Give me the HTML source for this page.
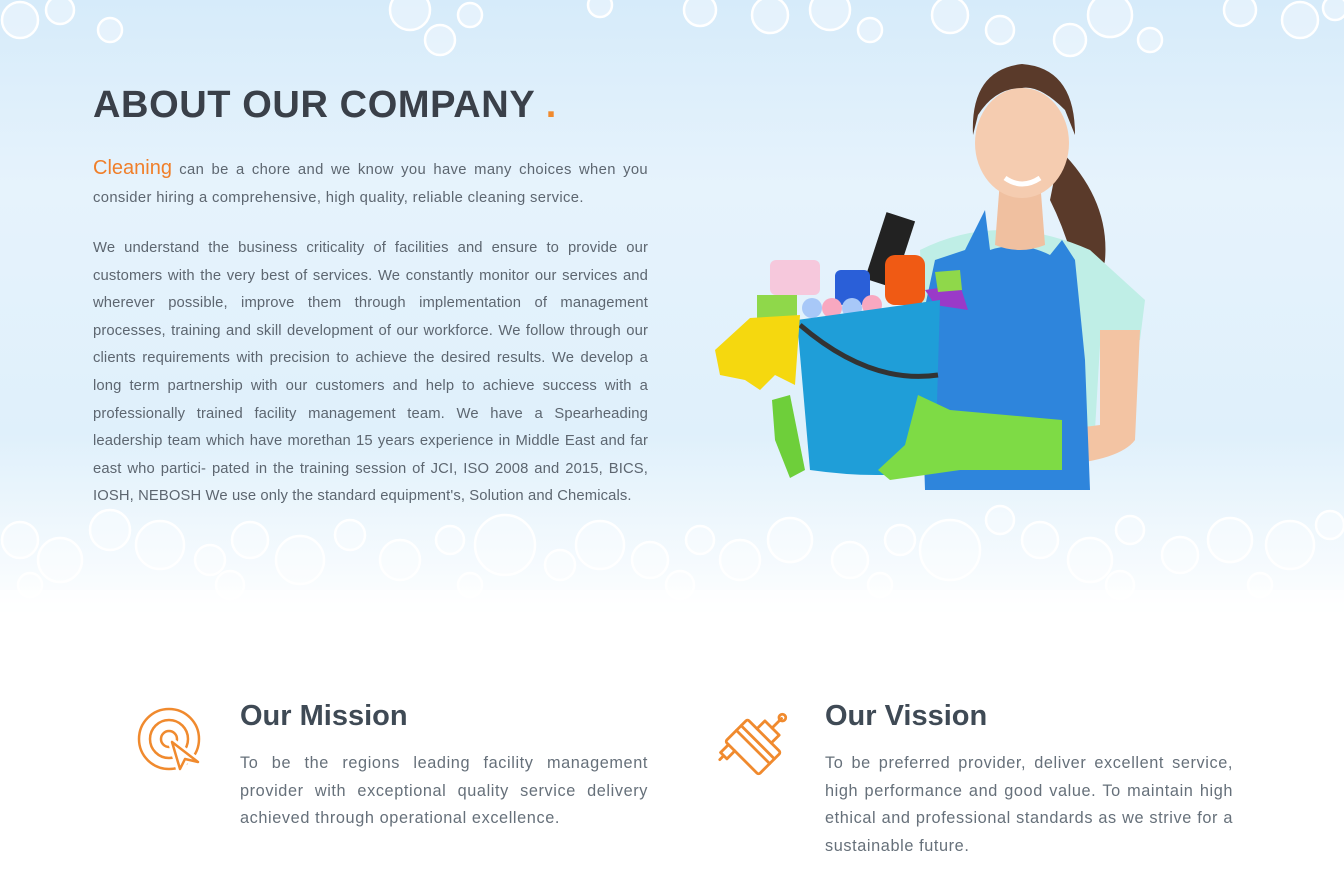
<!DOCTYPE html>
<html><head><meta charset="utf-8"><style>
*{margin:0;padding:0;box-sizing:border-box}
body{width:1344px;height:893px;overflow:hidden;background:#fff;font-family:"Liberation Sans",Arial,sans-serif;position:relative}
.hero{position:absolute;left:0;top:0;width:1344px;height:620px;background:linear-gradient(180deg,#d6ebfa 0%,#e6f3fc 30%,#dff0fb 70%,#fff 100%)}
svg.bg{position:absolute;left:0;top:0}
h1{position:absolute;left:93px;top:84px;font-size:38px;font-weight:bold;color:#3a4049;letter-spacing:0.6px;white-space:nowrap}
h1 span{color:#f08a2e}
.p{position:absolute;left:93px;width:555px;font-size:14.8px;line-height:27.6px;color:#5d6670;text-align:justify;letter-spacing:0.35px}
.p .o{color:#f07f2a;font-size:20px;letter-spacing:0}
h2{position:absolute;font-size:29px;font-weight:bold;color:#3f4a55}
.m{position:absolute;font-size:16.3px;line-height:27.6px;color:#66707a;text-align:justify;letter-spacing:0.6px}
</style></head><body>
<div class="hero"></div>
<svg class="bg" width="1344" height="620" fill="none" stroke="#fff" stroke-width="2.5">
<g fill="rgba(255,255,255,0.35)">
<circle cx="20" cy="20" r="18"/><circle cx="60" cy="10" r="14"/><circle cx="110" cy="30" r="12"/><circle cx="410" cy="10" r="20"/><circle cx="440" cy="40" r="15"/><circle cx="470" cy="15" r="12"/><circle cx="600" cy="5" r="12"/><circle cx="700" cy="10" r="16"/><circle cx="770" cy="15" r="18"/><circle cx="830" cy="10" r="20"/><circle cx="870" cy="30" r="12"/><circle cx="950" cy="15" r="18"/><circle cx="1000" cy="30" r="14"/><circle cx="1070" cy="40" r="16"/><circle cx="1110" cy="15" r="22"/><circle cx="1150" cy="40" r="12"/><circle cx="1240" cy="10" r="16"/><circle cx="1300" cy="20" r="18"/><circle cx="1335" cy="8" r="12"/>
<circle cx="20" cy="540" r="18"/><circle cx="60" cy="560" r="22"/><circle cx="110" cy="530" r="20"/><circle cx="160" cy="545" r="24"/><circle cx="210" cy="560" r="15"/><circle cx="250" cy="540" r="18"/><circle cx="300" cy="560" r="24"/><circle cx="350" cy="535" r="15"/><circle cx="400" cy="560" r="20"/><circle cx="450" cy="540" r="14"/><circle cx="505" cy="545" r="30"/><circle cx="560" cy="565" r="15"/><circle cx="600" cy="545" r="24"/><circle cx="650" cy="560" r="18"/><circle cx="700" cy="540" r="14"/><circle cx="740" cy="560" r="20"/><circle cx="790" cy="540" r="22"/><circle cx="850" cy="560" r="18"/><circle cx="900" cy="540" r="15"/><circle cx="950" cy="550" r="30"/><circle cx="1000" cy="520" r="14"/><circle cx="1040" cy="540" r="18"/><circle cx="1090" cy="560" r="22"/><circle cx="1130" cy="530" r="14"/><circle cx="1180" cy="555" r="18"/><circle cx="1230" cy="540" r="22"/><circle cx="1290" cy="545" r="24"/><circle cx="1330" cy="525" r="14"/>
<circle cx="30" cy="585" r="12"/><circle cx="230" cy="585" r="14"/><circle cx="470" cy="585" r="12"/><circle cx="680" cy="585" r="14"/><circle cx="880" cy="585" r="12"/><circle cx="1120" cy="585" r="14"/><circle cx="1260" cy="585" r="12"/>
</g>
<rect x="0" y="590" width="1344" height="30" fill="#fff" stroke="none" opacity="0.6"/>
</svg>
<svg class="bg" width="1344" height="620">
<path d="M1060 150 Q1110 200 1105 260 Q1100 290 1080 290 Q1070 240 1050 200Z" fill="#5a3a2a"/>
<path d="M920 250 Q1000 210 1090 250 L1145 300 L1140 340 L1100 345 L1095 430 L930 430Z" fill="#bfeee6"/>
<path d="M1100 330 L1140 330 L1135 440 Q1120 460 1060 465 L1060 430 L1100 425Z" fill="#f3c4a3"/>
<path d="M985 210 L965 250 L935 260 L920 330 L925 490 L1090 490 L1085 360 L1075 260 L1062 240 L1050 255 Q1020 240 990 250Z" fill="#2e85dc"/>
<path d="M1000 180 L1040 180 L1045 245 Q1020 255 995 245Z" fill="#f0c0a0"/>
<ellipse cx="1022" cy="143" rx="47" ry="55" fill="#f5ccb0"/>
<path d="M973 135 Q970 70 1022 64 Q1075 68 1075 135 L1065 110 Q1040 85 1022 88 Q995 88 978 115Z" fill="#5a3a2a"/>
<path d="M1005 178 Q1022 190 1040 178" stroke="#fff" stroke-width="5" fill="none"/>
<rect x="875" y="215" width="30" height="70" fill="#222" transform="rotate(18 890 250)"/>
<rect x="885" y="255" width="40" height="50" rx="10" fill="#f05a14"/>
<rect x="835" y="270" width="35" height="35" rx="6" fill="#2a5fd8"/>
<rect x="770" y="260" width="50" height="35" rx="6" fill="#f6c8dc"/>
<rect x="757" y="295" width="40" height="25" fill="#8fd84a"/>
<circle cx="812" cy="308" r="10" fill="#a8c8f8"/><circle cx="832" cy="308" r="10" fill="#f8a8c0"/><circle cx="852" cy="308" r="10" fill="#a8c8f8"/><circle cx="872" cy="305" r="10" fill="#f8a8c0"/>
<path d="M925 290 L960 285 L968 310 L935 305Z" fill="#9a3ac8"/><path d="M935 272 L960 270 L962 290 L938 292Z" fill="#8fd84a"/>
<path d="M797 320 L940 300 L935 470 Q880 480 810 470Z" fill="#1f9ed8"/>
<path d="M800 325 Q870 385 938 375" stroke="#333" stroke-width="5" fill="none"/>
<path d="M715 350 L750 318 L800 315 L795 385 L775 375 L760 390 L745 380 L720 375Z" fill="#f5d80f"/>
<path d="M772 400 L790 395 L805 470 L790 478 L775 440Z" fill="#6ecf3a"/>
<path d="M878 470 L905 445 L918 395 L950 410 L1062 420 L1062 470 L960 470 L890 480Z" fill="#7edb45"/>
</svg>
<h1>ABOUT OUR COMPANY <span>.</span></h1>
<div class="p" style="top:155px"><span class="o">Cleaning</span> can be a chore and we know you have many choices when you consider hiring a comprehensive, high quality, reliable cleaning service.</div>
<div class="p" style="top:235px;letter-spacing:0.12px">We understand the business criticality of facilities and ensure to provide our customers with the very best of services. We constantly monitor our services and wherever possible, improve them through implementation of management processes, training and skill development of our workforce. We follow through our clients requirements with precision to achieve the desired results. We develop a long term partnership with our customers and help to achieve success with a professionally trained facility management team. We have a Spearheading leadership team which have morethan 15 years experience in Middle East and far east who partici- pated in the training session of JCI, ISO 2008 and 2015, BICS, IOSH, NEBOSH We use only the standard equipment's, Solution and Chemicals.</div>

<svg style="position:absolute;left:136px;top:707px" width="70" height="68" fill="none" stroke="#f08a2e" stroke-width="2.5" stroke-linejoin="round" stroke-linecap="round">
<circle cx="33" cy="32" r="30"/><circle cx="33" cy="32" r="19"/><circle cx="33" cy="32" r="8"/>
<path d="M36 35 L44 62 L49 52 L62 55 Z" fill="#fff" stroke="#fff" stroke-width="8"/>
<path d="M36 35 L44 62 L49 52 L62 55 Z" fill="#fff"/>
</svg>
<h2 style="left:240px;top:700px">Our Mission</h2>
<div class="m" style="left:240px;top:750px;width:408px">To be the regions leading facility management provider with exceptional quality service delivery achieved through operational excellence.</div>

<svg style="position:absolute;left:718px;top:704px" width="78" height="78" fill="none" stroke="#f08a2e" stroke-width="2.5" stroke-linejoin="round" stroke-linecap="round">
<g transform="translate(39 39) rotate(45) scale(1.12) translate(-35 -35)">
<rect x="14" y="26" width="42" height="28" rx="2"/>
<path d="M14 34 L56 34 M14 40 L56 40 M18 54 L18 64 L26 64 L26 54 M22 64 L22 69"/>
<path d="M26 26 L26 16 L44 16 L44 26"/>
<path d="M35 16 L35 4"/><circle cx="35" cy="3" r="3"/>
</g>
</svg>
<h2 style="left:825px;top:700px">Our Vission</h2>
<div class="m" style="left:825px;top:750px;width:408px">To be preferred provider, deliver excellent service, high performance and good value. To maintain high ethical and professional standards as we strive for a sustainable future.</div>
</body></html>
